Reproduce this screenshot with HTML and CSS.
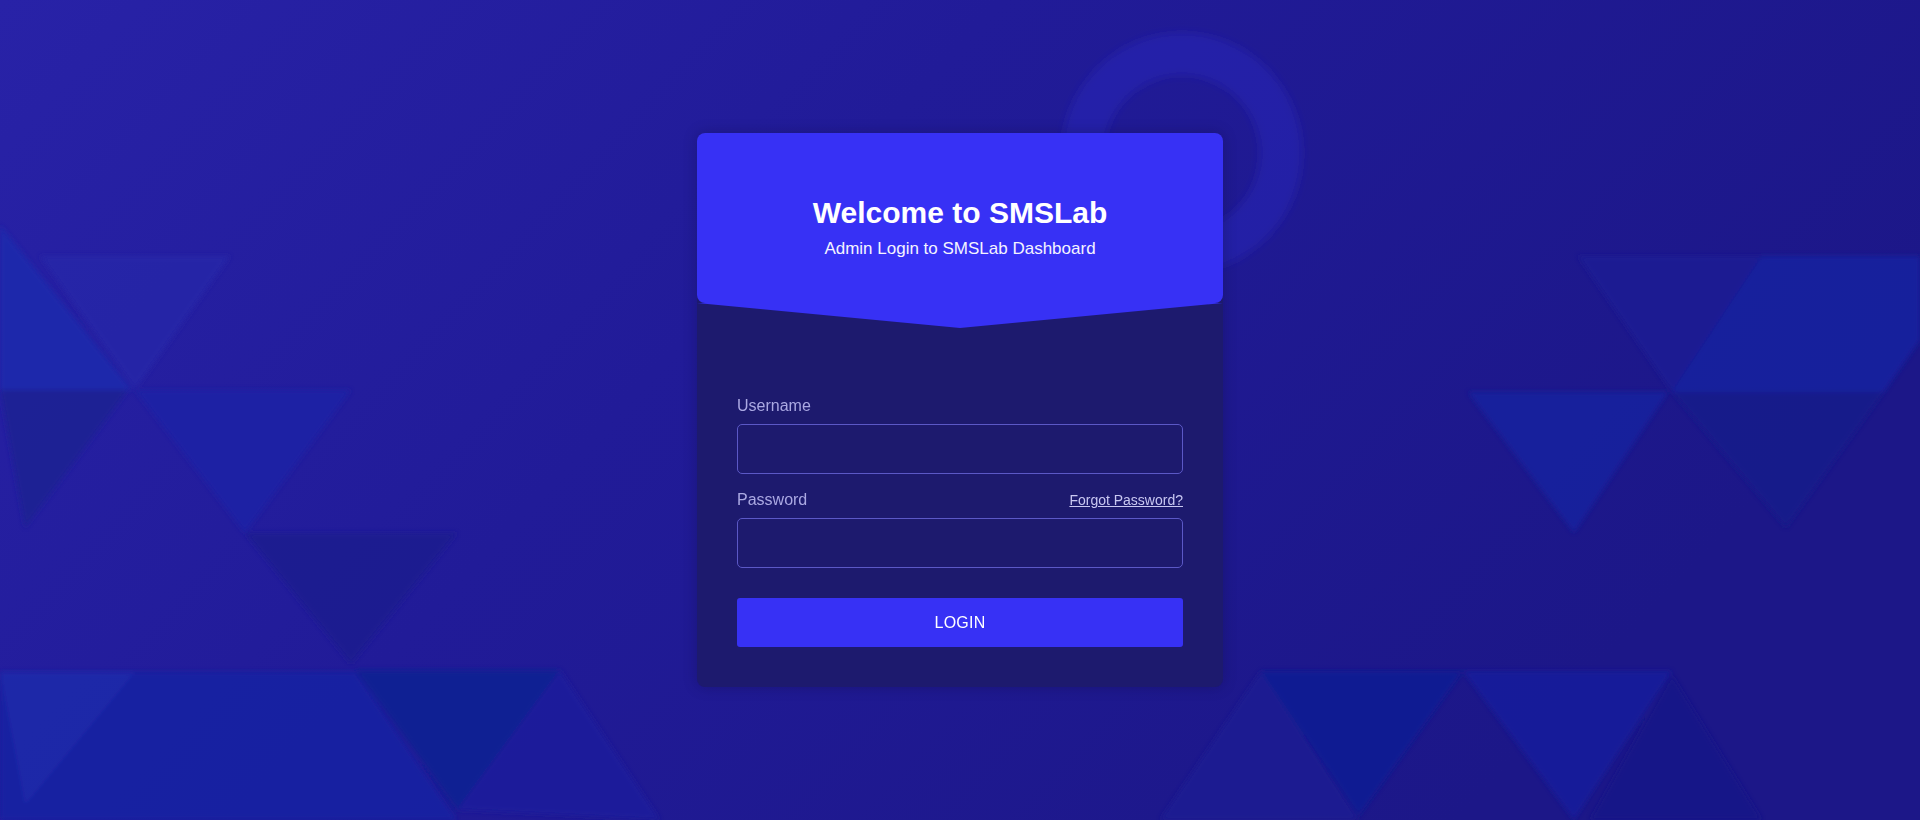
FILE: index.html
```html
<!DOCTYPE html>
<html lang="en">
<head>
<meta charset="utf-8">
<title>SMSLab Admin Login</title>
<link rel="stylesheet" href="styles.css">
</head>
<body>
<div class="bg" aria-hidden="true">
  <svg class="bg-svg" viewBox="0 0 1920 820" preserveAspectRatio="none" xmlns="http://www.w3.org/2000/svg">
    <defs>
      <linearGradient id="base" x1="0" y1="0" x2="1" y2="0.4">
        <stop offset="0" stop-color="#2822a7"/>
        <stop offset="0.45" stop-color="#211b98"/>
        <stop offset="1" stop-color="#1c1788"/>
      </linearGradient>
      <filter id="soft" x="-5%" y="-5%" width="110%" height="110%">
        <feGaussianBlur stdDeviation="2.5"/>
      </filter>
      <filter id="ringblur" x="-20%" y="-20%" width="140%" height="140%">
        <feGaussianBlur stdDeviation="4"/>
      </filter>
    </defs>
    <rect x="0" y="0" width="1920" height="820" fill="url(#base)"/>
    <g filter="url(#soft)" opacity="0.85">
      <polygon points="0,225 132,390 0,390" fill="#1a29ad"/>
      <polygon points="40,256 230,256 135,390" fill="#2525a8"/>
      <polygon points="0,390 128,390 25,528" fill="#1b2193"/>
      <polygon points="135,390 351,390 245,533" fill="#1b24a6"/>
      <polygon points="245,533 457,533 351,664" fill="#1b1e8f"/>
      <polygon points="0,672 355,672 457,820 0,820" fill="#1521a3"/>
      <polygon points="0,672 135,672 25,805" fill="#1f2bab"/>
      <polygon points="355,670 560,670 457,810" fill="#0f2093"/>
      <polygon points="457,810 560,670 660,820" fill="#1a1f9c"/>
      <polygon points="1578,256 1762,256 1672,392" fill="#1b1f94"/>
      <polygon points="1762,256 1920,256 1920,340 1884,392 1672,392" fill="#1321a0"/>
      <polygon points="1468,392 1668,392 1574,533" fill="#18219f"/>
      <polygon points="1672,392 1884,392 1786,528" fill="#161b8b"/>
      <polygon points="1261,671 1463,671 1359,816" fill="#111e94"/>
      <polygon points="1463,671 1672,671 1574,820" fill="#171e9c"/>
      <polygon points="1590,820 1672,675 1762,820" fill="#151788"/>
      <polygon points="1160,820 1261,671 1359,820" fill="#1a1c93"/>
    </g>
    <circle cx="1182" cy="153" r="99" fill="none" stroke="#2f2ad0" stroke-opacity="0.32" stroke-width="42" filter="url(#ringblur)"/>
  </svg>
</div>

<main class="page">
  <div class="card">
    <div class="card-header">
      <h1 class="title">Welcome to SMSLab</h1>
      <p class="subtitle">Admin Login to SMSLab Dashboard</p>
    </div>
    <form class="card-body">
      <div class="field field-first">
        <label class="label" for="username">Username</label>
        <input class="input" id="username" type="text">
      </div>
      <div class="field">
        <div class="label-row">
          <label class="label" for="password">Password</label>
          <a class="forgot" href="#">Forgot Password?</a>
        </div>
        <input class="input" id="password" type="password">
      </div>
      <button class="btn" type="button">LOGIN</button>
    </form>
  </div>
</main>
</body>
</html>
```

FILE: styles.css
```css
* {
  box-sizing: border-box;
}

html, body {
  margin: 0;
  padding: 0;
  height: 100%;
}

body {
  font-family: "Liberation Sans", Arial, Helvetica, sans-serif;
  background: #221c9a;
  overflow: hidden;
}

.bg {
  position: fixed;
  inset: 0;
  z-index: 0;
}

.bg-svg {
  display: block;
  width: 100%;
  height: 100%;
}

.page {
  position: relative;
  z-index: 1;
  height: 100vh;
  display: flex;
  align-items: center;
  justify-content: center;
}

.card {
  width: 526px;
  background: #1d1a6e;
  border-radius: 8px;
  box-shadow: 0 0 14px rgba(12, 10, 60, 0.3);
}

.card-header {
  position: relative;
  height: 170px;
  padding: 62px 20px 0;
  background: #3731f5;
  border-radius: 8px;
  text-align: center;
  color: #ffffff;
}

.card-header::after {
  content: "";
  position: absolute;
  left: 0;
  right: 0;
  top: 100%;
  height: 25px;
  background: #3731f5;
  clip-path: polygon(0 0, 100% 0, 50% 100%);
}

.title {
  margin: 0 0 6px;
  font-size: 30px;
  line-height: 36px;
  font-weight: 700;
  color: #ffffff;
}

.subtitle {
  margin: 0;
  font-size: 17px;
  line-height: 24px;
  color: #f4f4ff;
}

.card-body {
  margin: 0;
  padding: 91px 40px 40px;
  display: flex;
  flex-direction: column;
}

.field-first {
  margin-bottom: 14px;
}

.label {
  display: block;
  font-size: 16px;
  line-height: 24px;
  color: #aba9e3;
  margin-bottom: 6px;
}

.label-row {
  display: flex;
  justify-content: space-between;
  align-items: center;
  margin-bottom: 6px;
}

.label-row .label {
  margin-bottom: 0;
}

.forgot {
  font-size: 14px;
  line-height: 22px;
  color: #c9c8f2;
  text-decoration: underline;
}

.input {
  display: block;
  width: 100%;
  height: 50px;
  margin: 0;
  padding: 0 14px;
  background: transparent;
  border: 1px solid #5b58c6;
  border-radius: 5px;
  color: #ffffff;
  font-family: inherit;
  font-size: 16px;
  outline: none;
}

.btn {
  margin-top: 30px;
  height: 49px;
  width: 100%;
  border: none;
  border-radius: 3px;
  background: #3731f5;
  color: #ffffff;
  font-family: inherit;
  font-size: 16px;
  letter-spacing: 0.2px;
  cursor: pointer;
}
```
